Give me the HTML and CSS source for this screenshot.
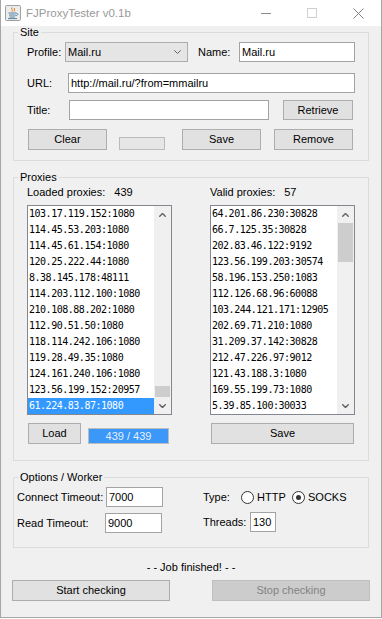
FILE: index.html
```html
<!DOCTYPE html>
<html>
<head>
    <title>FJProxyTester v0.1b</title>
    <link rel="stylesheet" href="styles.css">
</head>
<body>
    <div class="window">
        <div class="titlebar">
            <svg class="app-icon" width="16" height="16" viewBox="0 0 16 16">
                <rect x="0.5" y="0.5" width="15" height="15" rx="1" fill="#ececec" stroke="#a0a0a0"/>
                <path d="M7 2.5 C5.5 4 8.5 5 7 6.5 M9.5 3 C8.5 4 10.5 5 9 6.5" fill="none" stroke="#e76f00" stroke-width="1"/>
                <path d="M3.5 8 H11 M4 10 H10.5 M11 8.3 C13.5 8 13.5 10.5 10.5 10.6 M4.5 12 H10 M3 13.6 H12" fill="none" stroke="#5382a1" stroke-width="1"/>
            </svg>
            <span class="title">FJProxyTester v0.1b</span>
            <div class="caption-btns">
                <div class="cap-btn">
                    <svg width="10" height="10" viewBox="0 0 10 10"><path d="M0 5.5 H10" stroke="#8a8a8a" stroke-width="1"/></svg>
                </div>
                <div class="cap-btn">
                    <svg width="10" height="10" viewBox="0 0 10 10"><rect x="0.5" y="0.5" width="9" height="9" fill="none" stroke="#d0d0d0"/></svg>
                </div>
                <div class="cap-btn">
                    <svg width="11" height="11" viewBox="0 0 11 11"><path d="M0.5 0.5 L10.5 10.5 M10.5 0.5 L0.5 10.5" stroke="#808080" stroke-width="1"/></svg>
                </div>
            </div>
        </div>

        <div class="content">
            <fieldset class="group site">
                <legend>Site</legend>
                <div class="row">
                    <span class="lbl lbl-profile">Profile:</span>
                    <div class="combo">
                        <span class="combo-text">Mail.ru</span>
                        <svg width="7" height="4" viewBox="0 0 7 4"><path d="M0.3 0.3 L3.5 3.5 L6.7 0.3" fill="none" stroke="#606060" stroke-width="1"/></svg>
                    </div>
                    <span class="lbl lbl-name">Name:</span>
                    <div class="field f-name">Mail.ru</div>
                </div>
                <div class="row row-url">
                    <span class="lbl lbl-url">URL:</span>
                    <div class="field f-url">http://mail.ru/?from=mmailru</div>
                </div>
                <div class="row row-title">
                    <span class="lbl lbl-title">Title:</span>
                    <div class="field f-title"></div>
                    <div class="btn btn-retrieve">Retrieve</div>
                </div>
                <div class="row row-buttons">
                    <div class="btn btn-clear">Clear</div>
                    <div class="bar-empty"></div>
                    <div class="btn btn-save-site">Save</div>
                    <div class="btn btn-remove">Remove</div>
                </div>
            </fieldset>

            <fieldset class="group proxies">
                <legend>Proxies</legend>
                <div class="cols">
                    <div class="col">
                        <div class="count">Loaded proxies:<span class="num">439</span></div>
                        <div class="list">
                            <div class="items">
                                <div class="item">103.17.119.152:1080</div>
                                <div class="item">114.45.53.203:1080</div>
                                <div class="item">114.45.61.154:1080</div>
                                <div class="item">120.25.222.44:1080</div>
                                <div class="item">8.38.145.178:48111</div>
                                <div class="item">114.203.112.100:1080</div>
                                <div class="item">210.108.88.202:1080</div>
                                <div class="item">112.90.51.50:1080</div>
                                <div class="item">118.114.242.106:1080</div>
                                <div class="item">119.28.49.35:1080</div>
                                <div class="item">124.161.240.106:1080</div>
                                <div class="item">123.56.199.152:20957</div>
                                <div class="item selected">61.224.83.87:1080</div>
                            </div>
                            <div class="scrollbar">
                                <div class="sb-btn">
                                    <svg width="7" height="4" viewBox="0 0 7 4"><path d="M0.3 3.7 L3.5 0.5 L6.7 3.7" fill="none" stroke="#606060" stroke-width="1.4"/></svg>
                                </div>
                                <div class="sb-track at-end"><div class="thumb thumb-small"></div></div>
                                <div class="sb-btn">
                                    <svg width="7" height="4" viewBox="0 0 7 4"><path d="M0.3 0.3 L3.5 3.5 L6.7 0.3" fill="none" stroke="#606060" stroke-width="1.4"/></svg>
                                </div>
                            </div>
                        </div>
                        <div class="col-foot">
                            <div class="btn btn-load">Load</div>
                            <div class="progress">439 / 439</div>
                        </div>
                    </div>
                    <div class="col col-right">
                        <div class="count">Valid proxies:<span class="num">57</span></div>
                        <div class="list">
                            <div class="items">
                                <div class="item">64.201.86.230:30828</div>
                                <div class="item">66.7.125.35:30828</div>
                                <div class="item">202.83.46.122:9192</div>
                                <div class="item">123.56.199.203:30574</div>
                                <div class="item">58.196.153.250:1083</div>
                                <div class="item">112.126.68.96:60088</div>
                                <div class="item">103.244.121.171:12905</div>
                                <div class="item">202.69.71.210:1080</div>
                                <div class="item">31.209.37.142:30828</div>
                                <div class="item">212.47.226.97:9012</div>
                                <div class="item">121.43.188.3:1080</div>
                                <div class="item">169.55.199.73:1080</div>
                                <div class="item">5.39.85.100:30033</div>
                            </div>
                            <div class="scrollbar">
                                <div class="sb-btn">
                                    <svg width="7" height="4" viewBox="0 0 7 4"><path d="M0.3 3.7 L3.5 0.5 L6.7 3.7" fill="none" stroke="#606060" stroke-width="1.4"/></svg>
                                </div>
                                <div class="sb-track"><div class="thumb thumb-large"></div></div>
                                <div class="sb-btn">
                                    <svg width="7" height="4" viewBox="0 0 7 4"><path d="M0.3 0.3 L3.5 3.5 L6.7 0.3" fill="none" stroke="#606060" stroke-width="1.4"/></svg>
                                </div>
                            </div>
                        </div>
                        <div class="col-foot">
                            <div class="btn btn-save-list">Save</div>
                        </div>
                    </div>
                </div>
            </fieldset>

            <fieldset class="group options">
                <legend>Options / Worker</legend>
                <div class="opts">
                    <div class="opt-col">
                        <div class="orow">
                            <span class="lbl lbl-connect">Connect Timeout:</span>
                            <div class="field f-timeout">7000</div>
                        </div>
                        <div class="orow orow-2">
                            <span class="lbl lbl-read">Read Timeout:</span>
                            <div class="field f-timeout">9000</div>
                        </div>
                    </div>
                    <div class="opt-col opt-col-right">
                        <div class="orow">
                            <span class="lbl lbl-type">Type:</span>
                            <div class="choice choice-http"><span class="radio"></span><span class="choice-text">HTTP</span></div>
                            <div class="choice"><span class="radio on"></span><span class="choice-text">SOCKS</span></div>
                        </div>
                        <div class="orow orow-threads">
                            <span class="lbl lbl-threads">Threads:</span>
                            <div class="field f-threads">130</div>
                        </div>
                    </div>
                </div>
            </fieldset>

            <div class="status">- - Job finished! - -</div>

            <div class="actions">
                <div class="btn btn-wide">Start checking</div>
                <div class="btn btn-wide disabled">Stop checking</div>
            </div>
        </div>
    </div>
</body>
</html>
```

FILE: styles.css
```css
* {
    box-sizing: border-box;
}

body {
    margin: 0;
    background: #ffffff;
    font-family: "Liberation Sans", Arial, sans-serif;
    font-size: 11px;
    color: #000000;
}

.window {
    width: 382px;
    height: 618px;
    background: #f0f0f0;
    border: 1px solid #a6a6a6;
    border-top: 0;
    display: flex;
    flex-direction: column;
}

/* title bar */
.titlebar {
    height: 26px;
    background: #ffffff;
    display: flex;
    align-items: center;
}

.app-icon {
    margin-left: 4px;
    margin-top: -1px;
}

.title {
    margin-left: 5px;
    color: #999999;
    font-size: 11.5px;
}

.caption-btns {
    margin-left: auto;
    display: flex;
    height: 100%;
}

.cap-btn {
    width: 46px;
    display: flex;
    align-items: center;
    justify-content: center;
}

/* main area */
.content {
    padding: 0 11px;
    display: flex;
    flex-direction: column;
}

.group {
    margin: 0 1px;
    padding: 0;
    border: 1px solid #dcdcdc;
    min-width: 0;
}

.group legend {
    margin-left: 4px;
    padding: 0 2px;
    line-height: 13px;
}

.site {
    padding-bottom: 10px;
}

.proxies {
    margin-top: 10px;
    padding-bottom: 16px;
}

.options {
    margin-top: 10px;
    padding-bottom: 14px;
}

.row {
    display: flex;
    align-items: center;
    padding-left: 13px;
}

.site .row:first-of-type {
    margin-top: 3px;
}

.row-url {
    margin-top: 11px;
}

.row-title {
    margin-top: 7px;
}

.row-buttons {
    margin-top: 9px;
    align-items: flex-start;
}

.lbl {
    white-space: nowrap;
}

.lbl-profile { width: 38px; }
.lbl-name { width: 41px; margin-left: 10px; }
.lbl-url { width: 41px; }
.lbl-title { width: 42px; }

.field {
    height: 20px;
    background: #ffffff;
    border: 1px solid #a3a3a3;
    padding-left: 2px;
    line-height: 18px;
    white-space: nowrap;
    overflow: hidden;
}

.f-name { width: 116px; }
.f-url { width: 287px; }
.f-title { width: 200px; }

.combo {
    width: 123px;
    height: 20px;
    background: #e5e5e5;
    border: 1px solid #adadad;
    padding-left: 2px;
    display: flex;
    align-items: center;
}

.combo-text {
    flex: 1;
}

.combo svg {
    margin-right: 6px;
}

.btn {
    height: 21px;
    background: #e1e1e1;
    border: 1px solid #adadad;
    text-align: center;
    line-height: 19px;
    white-space: nowrap;
}

.btn-retrieve {
    width: 70px;
    height: 20px;
    line-height: 18px;
    margin-left: 14px;
}

.btn-clear { width: 79px; margin-left: 1px; }
.btn-save-site { width: 79px; margin-left: 17px; }
.btn-remove { width: 79px; margin-left: 13px; }

.bar-empty {
    width: 46px;
    height: 13px;
    margin: 8px 0 0 12px;
    background: #e6e6e6;
    border: 1px solid #bcbcbc;
}

/* proxies lists */
.cols {
    display: flex;
    padding-left: 13px;
}

.col {
    width: 145px;
}

.col-right {
    margin-left: 38px;
}

.count {
    line-height: 14px;
    padding-top: 1px;
}

.count .num {
    margin-left: 9px;
}

.list {
    margin-top: 6px;
    height: 210px;
    background: #ffffff;
    border: 1px solid #828790;
    display: flex;
}

.items {
    flex: 1;
    font-family: "DejaVu Sans Mono", monospace;
    font-size: 10px;
    letter-spacing: -0.48px;
    line-height: 16px;
    overflow: hidden;
}

.item {
    padding-left: 1px;
    white-space: nowrap;
}

.item.selected {
    background: #3399ff;
    color: #ffffff;
}

.scrollbar {
    width: 17px;
    background: #f0f0f0;
    display: flex;
    flex-direction: column;
}

.sb-btn {
    height: 17px;
    display: flex;
    align-items: center;
    justify-content: center;
}

.sb-track {
    flex: 1;
    display: flex;
    flex-direction: column;
}

.sb-track.at-end {
    justify-content: flex-end;
}

.thumb {
    margin: 0 1px;
    background: #cdcdcd;
}

.thumb-small { height: 11px; }
.thumb-large { height: 39px; }

.col-foot {
    display: flex;
    align-items: flex-start;
    margin-top: 8px;
}

.btn-load {
    width: 53px;
    margin-left: 1px;
}

.progress {
    width: 81px;
    height: 16px;
    margin: 5px 0 0 7px;
    background: #3b98f8;
    border: 1px solid #bcbcbc;
    color: #e4efff;
    text-align: center;
    line-height: 14px;
}

.btn-save-list {
    width: 143px;
    margin-left: 1px;
}

/* options */
.opts {
    display: flex;
    padding: 3px 0 0 3px;
}

.orow {
    display: flex;
    align-items: center;
    height: 20px;
}

.orow-2 {
    margin-top: 6px;
}

.orow-threads {
    margin-top: 5px;
}

.opt-col-right {
    margin-left: 40px;
}

.lbl-connect { width: 89px; }
.lbl-read { width: 88px; }
.lbl-type { width: 38px; }
.lbl-threads { width: 47px; }

.f-timeout { width: 57px; }
.f-threads { width: 26px; }

.choice {
    display: flex;
    align-items: center;
}

.choice-http {
    width: 51px;
}

.choice-text {
    margin-left: 3px;
}

.radio {
    width: 13px;
    height: 13px;
    border: 1px solid #333333;
    border-radius: 50%;
    background: #ffffff;
    display: flex;
    align-items: center;
    justify-content: center;
}

.radio.on::after {
    content: "";
    width: 5px;
    height: 5px;
    border-radius: 50%;
    background: #333333;
}

/* bottom */
.status {
    margin-top: 12px;
    line-height: 14px;
    text-align: center;
}

.actions {
    display: flex;
    justify-content: space-between;
    margin-top: 6px;
}

.btn-wide {
    width: 158px;
}

.btn.disabled {
    background: #cccccc;
    border-color: #bfbfbf;
    color: #838383;
}
```
